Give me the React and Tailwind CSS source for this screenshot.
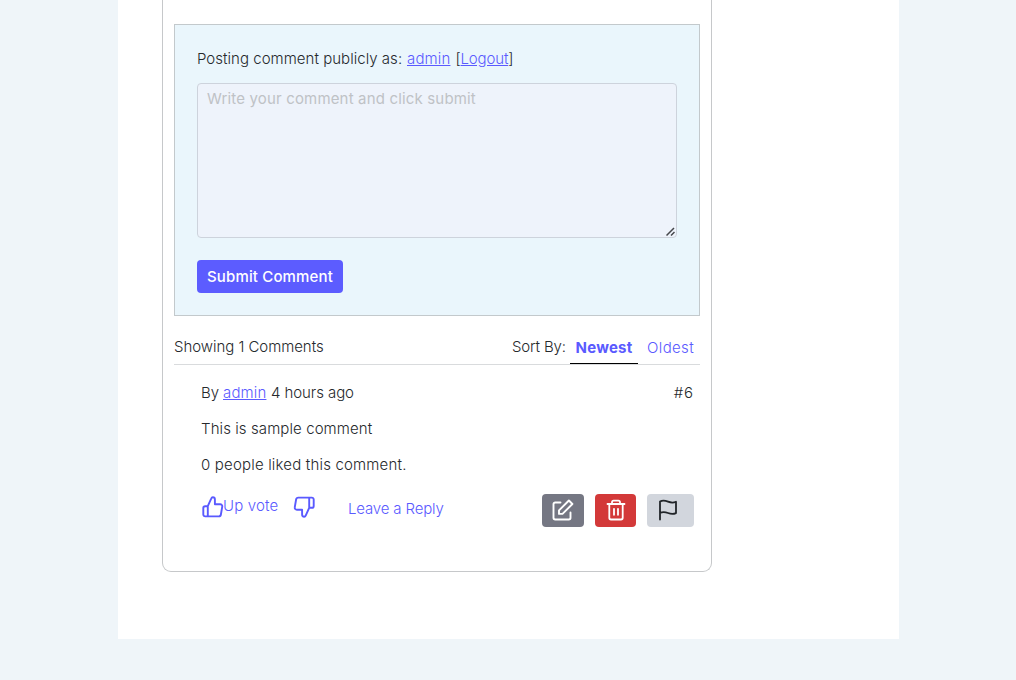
const link = "text-[#5a5aff]";

function ThumbUp({ className }) {
  return (
    <svg viewBox="0 0 22 22" className={className} fill="none" stroke="currentColor" strokeWidth="1.9" strokeLinejoin="round" strokeLinecap="round">
      <path d="M5.800 10.200 9.200 2.600c.4-1 .9-1.300 1.600-1.300 1.300 0 2.100.9 2.100 2.200v4.700h5.200c1.500 0 2.400 1.200 2.100 2.600l-1.300 7.700c-.2 1.200-1 1.900-2.100 1.900H3.200c-1.100 0-1.900-.8-1.900-1.900v-6.400c0-1.100.8-1.900 1.900-1.900H5.800zM5.800 10.200v10.200" />
    </svg>
  );
}

function EditIcon() {
  return (
    <svg viewBox="0 0 22 22" className="-mt-px size-[22px]" fill="none" stroke="currentColor" strokeWidth="1.9" strokeLinejoin="round" strokeLinecap="round">
      <path d="M8.500 3.500H3.200c-1 0-1.700.7-1.700 1.700v13.600c0 1 .7 1.700 1.700 1.700h13.600c1 0 1.700-.7 1.700-1.700V13.500" />
      <path d="m7 11.400 9.900-9.900 3.500 3.500-9.900 9.900H7z" />
    </svg>
  );
}

function TrashIcon() {
  return (
    <svg viewBox="0 0 22 22" className="-mt-px size-[22px]" fill="none" stroke="currentColor" strokeWidth="1.8" strokeLinejoin="round" strokeLinecap="round">
      <path d="M2.500 5h17M4.300 5v13.800c0 1 .7 1.700 1.700 1.700h10c1 0 1.700-.7 1.700-1.700V5M7 5V3.200c0-.9.7-1.600 1.600-1.600h4.800c.9 0 1.600.7 1.600 1.600V5M9 9.800v6M13 9.800v6" />
    </svg>
  );
}

function FlagIcon() {
  return (
    <svg viewBox="0 0 22 22" className="-mt-px size-[22px]" fill="none" stroke="currentColor" strokeWidth="1.8" strokeLinejoin="round" strokeLinecap="round">
      <path d="M3 20.500V2.600c2.600-1.500 5.200-1 8 .1s5.400 1.300 8 .1v11.300c-2.600 1.200-5.200 1-8-.1s-5.400-1.200-8-.2" />
    </svg>
  );
}

export default function App() {
  return (
    <div className="h-[680px] overflow-hidden bg-[#eff5f9] pl-[118px] font-['Inter','Liberation_Sans',sans-serif] text-[15px] leading-6 font-light text-[#26292c]">
      <main className="h-[639px] w-[781px] bg-white pl-[44px]">
        <section className="h-[572px] w-[550px] rounded-b-[9px] border border-t-0 border-[#c6c8ca] px-[11px] pt-6">
          <form className="h-[292px] border border-[#c3c9cc] bg-[#eaf6fc] px-[22px] pt-[22px]">
            <p className="flex whitespace-pre">
              <span className="w-[210px] tracking-[0.002em]">Posting comment publicly as:</span>
              <a className={`${link} mr-[5px] tracking-[0.01em] underline`}>admin</a>
              <span className="tracking-[-0.01em]">[<a className={`${link} underline`}>Logout</a>]</span>
            </p>
            <div className="relative mt-3 h-[155px] w-[480px]">
              <textarea
                placeholder="Write your comment and click submit"
                className="block h-full w-full resize-none rounded-[4px] border border-[#cdd3dc] bg-[#eef3fb] px-[9px] py-[3px] font-normal tracking-[0.011em] placeholder:text-[#bfc2c6]"
              />
              <svg viewBox="0 0 9 9" className="pointer-events-none absolute right-[2px] bottom-[2px] size-[9px]" fill="none" stroke="#45474b" strokeWidth="1.5">
                <path d="M.500 8.500 8 1M5 8.500 8.500 5" />
              </svg>
            </div>
            <button type="button" className="mt-[22px] h-[33px] w-[146px] rounded-[4px] bg-[#5c5cff] font-medium tracking-[0.01em] whitespace-nowrap text-white">
              Submit Comment
            </button>
          </form>
          <div className="flex h-[49px] items-start border-b border-[#d9dbdd] pt-[19px]">
            <span className="w-[338px] tracking-[-0.003em]">Showing 1 Comments</span>
            <span className="w-[58px] tracking-[-0.01em]">Sort By:</span>
            <a className={`${link} h-[29px] w-[68px] border-b border-black pt-px text-center font-bold tracking-[0.015em]`}>Newest</a>
            <a className={`${link} pt-px pl-[9px] tracking-[0.025em]`}>Oldest</a>
          </div>
          <article className="pt-4 pr-[6px] pl-[27px]">
            <div className="flex">
              <span className="w-[22px]">By</span>
              <a className={`${link} w-[48px] tracking-[0.01em] underline`}>admin</a>
              <span className="tracking-[-0.005em]">4 hours ago</span>
              <span className="ml-auto tracking-[0.06em]">#6</span>
            </div>
            <p className="mt-3 tracking-[0.006em]">This is sample comment</p>
            <p className="mt-3 tracking-[0.012em]">0 people liked this comment.</p>
            <div className="mt-[17px] flex items-start pl-px">
              <a className={`${link} flex w-[91px] whitespace-nowrap`}>
                <ThumbUp className="mt-[2px] size-[22px] shrink-0" />
                <span className="-ml-px tracking-[0.01em]">Up vote</span>
              </a>
              <a className={`${link} w-[55px]`}>
                <ThumbUp className="mt-[2px] size-[22px] rotate-180" />
              </a>
              <a className={`${link} pt-[3px] tracking-[-0.01em]`}>Leave a Reply</a>
              <div className="ml-auto flex gap-[11px]">
                <button className="flex h-[33px] w-[42px] items-center justify-center rounded-[4px] bg-[#757783] text-white"><EditIcon /></button>
                <button className="flex h-[33px] w-[41px] items-center justify-center rounded-[4px] bg-[#d33939] text-white"><TrashIcon /></button>
                <button className="flex h-[33px] w-[47px] items-center rounded-[4px] bg-[#d2d6dd] pl-[10px] text-[#212529]"><FlagIcon /></button>
              </div>
            </div>
          </article>
        </section>
      </main>
    </div>
  );
}
